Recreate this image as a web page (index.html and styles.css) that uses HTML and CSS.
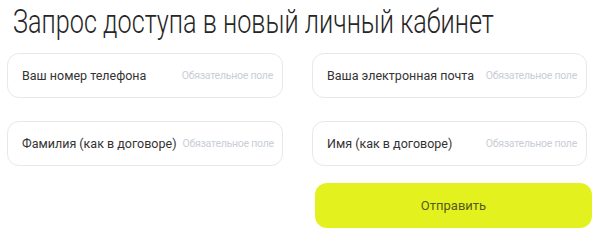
FILE: index.html
```html
<!DOCTYPE html>
<html lang="ru">

<head>
    <meta charset="UTF-8">
    <meta name="viewport" content="width=device-width, initial-scale=1.0">
    <title>Запрос доступа</title>
    <link rel="stylesheet" href="styles.css">
</head>

<body>
    <div class="page">
        <h1 class="title"><span class="title-text">Запрос доступа в новый личный кабинет</span></h1>
        <form class="form">
            <label class="field">
                <span class="field-label">Ваш номер телефона</span>
                <span class="field-hint">Обязательное поле</span>
            </label>
            <label class="field">
                <span class="field-label">Ваша электронная почта</span>
                <span class="field-hint">Обязательное поле</span>
            </label>
            <label class="field">
                <span class="field-label">Фамилия (как в договоре)</span>
                <span class="field-hint">Обязательное поле</span>
            </label>
            <label class="field">
                <span class="field-label">Имя (как в договоре)</span>
                <span class="field-hint">Обязательное поле</span>
            </label>
            <button type="button" class="submit">Отправить</button>
        </form>
    </div>
</body>

</html>
```

FILE: styles.css
```css
body {
    margin: 0;
    background: #fff;
    font-family: Roboto, "Noto Sans", sans-serif;
    overflow: hidden;
}
.page {
    padding: 3px 0 0 7px;
}
.title {
    margin: 0 0 13px 6px;
    font-family: Roboto, sans-serif;
    font-weight: 300;
    font-size: 33px;
    line-height: 37px;
    color: #262626;
    white-space: nowrap;
    overflow: hidden;
}
.title-text {
    display: inline-block;
    transform: scaleX(0.765);
    transform-origin: left center;
}
.form {
    display: grid;
    grid-template-columns: 276px 275px;
    column-gap: 29px;
    row-gap: 23px;
}
.field {
    height: 45px;
    box-sizing: border-box;
    border: 1px solid #e6e8ec;
    border-radius: 12px;
    display: flex;
    align-items: center;
    justify-content: space-between;
    gap: 6px;
    padding: 0 9px 0 14px;
    background: #fff;
    white-space: nowrap;
}
.field-label {
    font-size: 12.5px;
    color: #333;
}
.field-hint {
    font-size: 10.5px;
    letter-spacing: -0.25px;
    color: #c9ced6;
}
.submit {
    grid-column: 2;
    margin: -6px -5px 0 3px;
    height: 45px;
    border: 0;
    border-radius: 12px;
    background: #e3f21f;
    font-family: Roboto, sans-serif;
    font-size: 13px;
    color: #55591c;
}
```
